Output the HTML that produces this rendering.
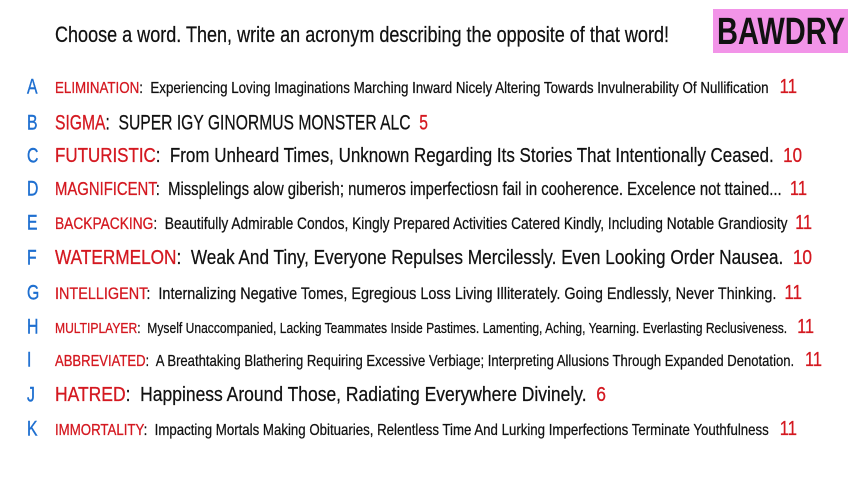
<!DOCTYPE html>
<html><head><meta charset="utf-8"><style>
html,body{margin:0;padding:0;background:#fff;width:853px;height:480px;overflow:hidden;position:relative;font-family:"Liberation Sans",sans-serif}
.l{position:absolute;white-space:nowrap;transform-origin:0 50%;color:#111;line-height:1;-webkit-text-stroke:0.25px #111}
.r{color:#d41820;-webkit-text-stroke:0.3px #d41820}
.n{color:#d41820;-webkit-text-stroke:0.3px #d41820}
.k{position:absolute;left:27px;color:#1e6fd0;font-size:21px;line-height:1;transform:translateY(-50%) scaleX(.75);transform-origin:0 50%;-webkit-text-stroke:0.4px #1e6fd0}
#bx{position:absolute;left:713px;top:9px;width:135px;height:44px;background:#f294e8}
#bx span{position:absolute;left:4px;top:4px;font-size:38px;font-weight:bold;color:#111;line-height:1;white-space:nowrap;transform-origin:0 0}
</style></head><body>
<div id="bx"><span data-w="128" data-t="0">BAWDRY</span></div>
<div class="l" data-w="614" style="left:55px;top:35px;font-size:22px">Choose a word. Then, write an acronym describing the opposite of that word!</div>

<div class="k" style="top:87px">A</div>
<div class="l" data-w="742" style="left:55px;top:87px;font-size:16px"><span class="r">ELIMINATION</span>:&nbsp; Experiencing Loving Imaginations Marching Inward Nicely Altering Towards Invulnerability Of Nullification &nbsp;&nbsp;<span class="n" style="font-size:20px">11</span></div>
<div class="k" style="top:123px">B</div>
<div class="l" data-w="373" style="left:55px;top:123px;font-size:21px"><span class="r">SIGMA</span>:&nbsp; SUPER IGY GINORMUS MONSTER ALC &nbsp;<span class="n">5</span></div>
<div class="k" style="top:156px">C</div>
<div class="l" data-w="747" style="left:55px;top:156px;font-size:20px"><span class="r">FUTURISTIC</span>:&nbsp; From Unheard Times, Unknown Regarding Its Stories That Intentionally Ceased. &nbsp;<span class="n">10</span></div>
<div class="k" style="top:189px">D</div>
<div class="l" data-w="752" style="left:55px;top:189px;font-size:18px"><span class="r">MAGNIFICENT</span>:&nbsp; Missplelings alow giberish; numeros imperfectiosn fail in cooherence. Excelence not ttained... &nbsp;<span class="n" style="font-size:20px">11</span></div>
<div class="k" style="top:223px">E</div>
<div class="l" data-w="757" style="left:55px;top:223px;font-size:17px"><span class="r">BACKPACKING</span>:&nbsp; Beautifully Admirable Condos, Kingly Prepared Activities Catered Kindly, Including Notable Grandiosity &nbsp;<span class="n" style="font-size:20px">11</span></div>
<div class="k" style="top:258px">F</div>
<div class="l" data-w="757" style="left:55px;top:258px;font-size:20px"><span class="r">WATERMELON</span>:&nbsp; Weak And Tiny, Everyone Repulses Mercilessly. Even Looking Order Nausea. &nbsp;<span class="n">10</span></div>
<div class="k" style="top:293px">G</div>
<div class="l" data-w="747" style="left:55px;top:293px;font-size:17px"><span class="r">INTELLIGENT</span>:&nbsp; Internalizing Negative Tomes, Egregious Loss Living Illiterately. Going Endlessly, Never Thinking. &nbsp;<span class="n" style="font-size:20px">11</span></div>
<div class="k" style="top:327px">H</div>
<div class="l" data-w="759" style="left:55px;top:327px;font-size:15px"><span class="r">MULTIPLAYER</span>:&nbsp; Myself Unaccompanied, Lacking Teammates Inside Pastimes. Lamenting, Aching, Yearning. Everlasting Reclusiveness. &nbsp;&nbsp;<span class="n" style="font-size:20px">11</span></div>
<div class="k" style="top:360px">I</div>
<div class="l" data-w="767" style="left:55px;top:360px;font-size:16px"><span class="r">ABBREVIATED</span>:&nbsp; A Breathtaking Blathering Requiring Excessive Verbiage; Interpreting Allusions Through Expanded Denotation. &nbsp;&nbsp;<span class="n" style="font-size:20px">11</span></div>
<div class="k" style="top:395px">J</div>
<div class="l" data-w="551" style="left:55px;top:395px;font-size:20px"><span class="r">HATRED</span>:&nbsp; Happiness Around Those, Radiating Everywhere Divinely. &nbsp;<span class="n">6</span></div>
<div class="k" style="top:429px">K</div>
<div class="l" data-w="742" style="left:55px;top:429px;font-size:16px"><span class="r">IMMORTALITY</span>:&nbsp; Impacting Mortals Making Obituaries, Relentless Time And Lurking Imperfections Terminate Youthfulness &nbsp;&nbsp;<span class="n" style="font-size:20px">11</span></div>
<script>
document.querySelectorAll('[data-w]').forEach(function(e){
 e.style.display='inline-block';
 var w=e.getBoundingClientRect().width;
 var s=parseFloat(e.getAttribute('data-w'))/w;
 e.style.transform=(e.hasAttribute('data-t')?'':'translateY(-50%) ')+'scaleX('+s+')';
});
</script>
</body></html>
